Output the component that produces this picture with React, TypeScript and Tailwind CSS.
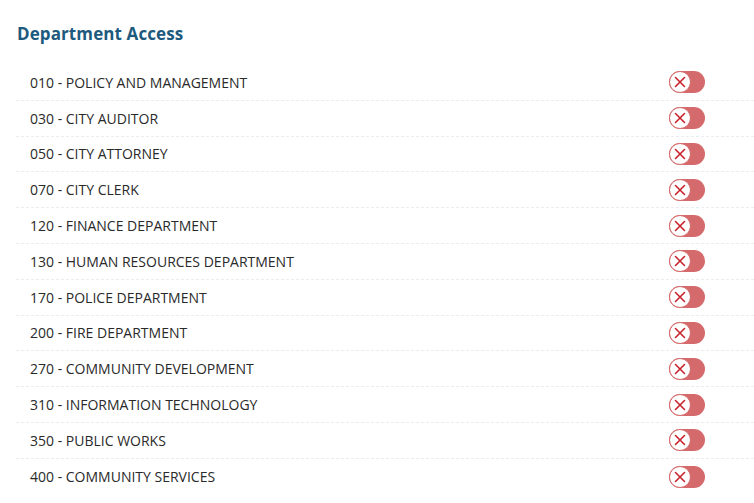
import React, { useState } from 'react';

const departments = [
  '010 - POLICY AND MANAGEMENT',
  '030 - CITY AUDITOR',
  '050 - CITY ATTORNEY',
  '070 - CITY CLERK',
  '120 - FINANCE DEPARTMENT',
  '130 - HUMAN RESOURCES DEPARTMENT',
  '170 - POLICE DEPARTMENT',
  '200 - FIRE DEPARTMENT',
  '270 - COMMUNITY DEVELOPMENT',
  '310 - INFORMATION TECHNOLOGY',
  '350 - PUBLIC WORKS',
  '400 - COMMUNITY SERVICES',
];

const Toggle: React.FC<{ on: boolean; onClick: () => void }> = ({ on, onClick }) => (
  <button
    onClick={onClick}
    className={`relative w-[36px] h-[22px] rounded-full flex items-center ${on ? 'bg-[#4f9a6a] justify-end' : 'bg-[#d46a6b] justify-start'}`}
  >
    <span className="w-[22px] h-[22px] rounded-full bg-white border-[1.5px] border-[#d46a6b] flex items-center justify-center">
      {!on && (
        <svg width="14" height="14" viewBox="0 0 14 14">
          <path d="M2.5 2.5L11.5 11.5M11.5 2.5L2.5 11.5" stroke="#c8232c" strokeWidth="1.6" strokeLinecap="round" />
        </svg>
      )}
    </span>
  </button>
);

const App: React.FC = () => {
  const [access, setAccess] = useState<boolean[]>(departments.map(() => false));

  return (
    <div className="bg-white w-[754px] h-[503px] overflow-hidden" style={{ fontFamily: '"Open Sans", sans-serif' }}>
      <h2 className="pl-[17px] pt-[23px] text-[17px] font-bold text-[#1d5a7e] leading-[22px] tracking-[0.1px]">
        Department Access
      </h2>
      <div className="ml-[16px] mt-[20px]">
        {departments.map((d, i) => (
          <div
            key={d}
            className={`h-[35.8px] flex items-center justify-between pl-[14px] pr-[49px] ${i < departments.length - 1 ? 'border-b border-dashed border-[#ececec]' : ''}`}
          >
            <span className="text-[14px] text-[#2a2a2a]">{d}</span>
            <Toggle on={access[i]} onClick={() => setAccess(a => a.map((v, j) => (j === i ? !v : v)))} />
          </div>
        ))}
      </div>
    </div>
  );
};

export default App;
